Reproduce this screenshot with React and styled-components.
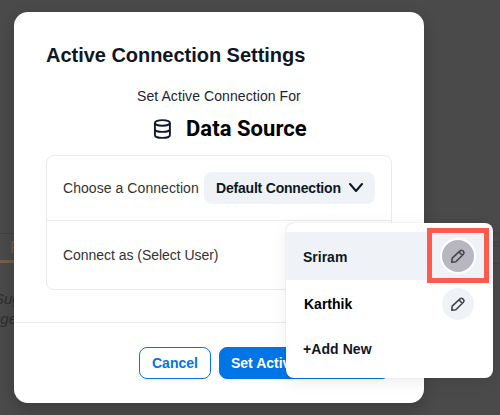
import React from "react";
import styled, { createGlobalStyle } from "styled-components";

const GlobalStyle = createGlobalStyle`
  * { box-sizing: border-box; }
  body { margin: 0; overflow: hidden; background: #4a4a4a; font-family: "Liberation Sans", Arial, sans-serif; }
`;

const Screen = styled.div`
  position: relative;
  width: 500px;
  height: 415px;
  padding: 12px 0 0 14px;
  overflow: hidden;
  background: #4a4a4a;
`;

const Backdrop = styled.div`
  position: absolute;
  top: 0;
  left: 0;
  width: 14px;
  height: 100%;
  padding-top: 233px;
  overflow: hidden;
  color: #2e2e2e;
`;

const BackdropTab = styled.div`
  height: 30px;
  padding: 5px 0 0 10px;
  border-top: 1px solid #424242;
  border-bottom: 3px solid #765f45;
  color: #765c42;
  font-size: 16px;
  line-height: 18px;
`;

const BackdropNote = styled.div`
  margin: 26px 0 0 ${(p) => p.$shift}px;
  font-size: 15px;
  font-style: italic;
  line-height: 20px;
  white-space: nowrap;
  & + & { margin-top: 0; }
`;

const BackdropRules = styled.div`
  position: absolute;
  top: 233px;
  right: 0;
  width: 10px;
  height: 31px;
  padding-top: 8px;
  border: solid #424242;
  border-width: 1px 0;
`;

const BackdropSeam = styled.div`
  height: 4px;
  border: solid #424242;
  border-width: 1px 0;
`;

const Modal = styled.section`
  position: relative;
  display: flex;
  flex-direction: column;
  width: 410px;
  height: 391px;
  border-radius: 14px;
  background: #fff;
  box-shadow: 0 6px 16px rgba(0, 0, 0, 0.2);
`;

const Title = styled.h1`
  margin: 31px 32px 0;
  color: #0e1726;
  font-size: 20px;
  line-height: 24px;
  letter-spacing: -0.03px;
  white-space: nowrap;
`;

const Caption = styled.p`
  margin: 19px 0 0 123px;
  color: #1c2433;
  font-size: 14px;
  line-height: 20px;
  letter-spacing: 0.08px;
`;

const Source = styled.div`
  display: flex;
  align-items: center;
  gap: 14px;
  height: 26px;
  margin: 10px 0 0 138px;
  color: #101828;
`;

const SourceName = styled.h2`
  margin: 0;
  color: #000;
  font-family: Roboto, sans-serif;
  font-size: 22px;
  font-weight: 700;
  line-height: 26px;
  letter-spacing: 0.05px;
  white-space: nowrap;
`;

const Settings = styled.div`
  height: 135px;
  margin: 13px 32px 0;
  border: 1px solid #ebebec;
  border-radius: 8px;
`;

const SettingRow = styled.div`
  display: flex;
  align-items: center;
  height: ${(p) => p.$height}px;
  padding: 0 16px;
  color: #333;
  font-size: 14px;
  white-space: nowrap;
  letter-spacing: ${(p) => p.$tracking}px;
  & + & { border-top: 1px solid #ebebec; }
`;

const Select = styled.button`
  display: flex;
  align-items: center;
  justify-content: space-between;
  width: 171px;
  height: 32px;
  margin-left: auto;
  padding: 0 12px;
  border: 0;
  border-radius: 8px;
  background: #eff3f7;
  color: #0e1726;
  font: 700 14px "Liberation Sans", Arial, sans-serif;
  letter-spacing: -0.2px;
`;

const Footer = styled.footer`
  display: flex;
  gap: 8px;
  height: 81px;
  margin-top: 32px;
  padding: 24px 0 0 125px;
  border-top: 1px solid #ebebec;
`;

const Button = styled.button`
  width: ${(p) => p.$width}px;
  height: 32px;
  padding: 0 ${(p) => (p.$primary ? 11 : 12)}px;
  border: 1px solid #0075e8;
  border-radius: 8px;
  background: ${(p) => (p.$primary ? "#0075e8" : "#fff")};
  color: ${(p) => (p.$primary ? "#fff" : "#0075e8")};
  font: 700 14px "Liberation Sans", Arial, sans-serif;
  text-align: left;
  white-space: nowrap;
  overflow: hidden;
`;

const Menu = styled.div`
  position: absolute;
  top: 223px;
  left: 286px;
  width: 207px;
  height: 155px;
  padding-top: 9px;
  border-radius: 8px;
  background: #fff;
  box-shadow: 0 0 1px rgba(0, 0, 0, 0.25), 0 4px 16px rgba(0, 0, 0, 0.08);
`;

const MenuItem = styled.div`
  display: flex;
  align-items: center;
  justify-content: space-between;
  height: ${(p) => p.$height}px;
  padding: 0 19px 0 ${(p) => p.$inset}px;
  background: ${(p) => (p.$active ? "#eff3f7" : "transparent")};
  color: ${(p) => p.$color || "#0e1726"};
  font-size: 14px;
  font-weight: 700;
  letter-spacing: ${(p) => p.$tracking || 0}px;
`;

const ItemLabel = styled.span`
  padding-top: ${(p) => p.$drop || 0}px;
`;

const EditButton = styled.button`
  display: flex;
  align-items: center;
  justify-content: center;
  width: 32px;
  height: 32px;
  padding: 0;
  border: 0;
  border-radius: 50%;
  background: ${(p) => (p.$active ? "#b7b6c1" : "#eff3f7")};
  box-shadow: ${(p) => (p.$active ? "0 0 0 2px #fff" : "none")};
  color: #45454d;
`;

const Highlight = styled.div`
  position: absolute;
  top: 5px;
  left: 141px;
  width: 62px;
  height: 55px;
  border: 5px solid #ff5a4c;
  pointer-events: none;
`;

const DatabaseIcon = () => (
  <svg width="20" height="20" viewBox="0 0 20 20" fill="none" stroke="currentColor" strokeWidth="1.9">
    <ellipse cx="10.4" cy="3.9" rx="7.5" ry="2.8" />
    <path d="M2.9 3.9v12c0 1.7 3.3 3 7.5 3s7.5-1.3 7.5-3v-12M2.9 9.9c0 1.7 3.3 3 7.5 3s7.5-1.3 7.5-3" />
  </svg>
);

const ChevronIcon = () => (
  <svg width="14" height="10" viewBox="0 0 14 10" fill="none" stroke="currentColor" strokeWidth="2" strokeLinecap="round" strokeLinejoin="round">
    <path d="M1 1l6 7 6-7" />
  </svg>
);

const PencilIcon = () => (
  <svg width="16" height="16" viewBox="0 0 16 16" fill="none" stroke="currentColor" strokeWidth="1.6" strokeLinejoin="round">
    <path d="M1.8 14.2l.4-4 7.8-7.3q1.4-1.3 2.7-.1l.8.8q1.2 1.3-.1 2.7l-7.6 7.5zM9 3.9l3.3 3.3" />
  </svg>
);

export default function App() {
  return (
    <>
      <GlobalStyle />
      <Screen>
        <Backdrop>
          <BackdropTab>F</BackdropTab>
          <BackdropNote $shift={-6}>Sug</BackdropNote>
          <BackdropNote $shift={-8}>gge</BackdropNote>
        </Backdrop>
        <BackdropRules><BackdropSeam /></BackdropRules>
        <Modal>
          <Title>Active Connection Settings</Title>
          <Caption>Set Active Connection For</Caption>
          <Source>
            <DatabaseIcon />
            <SourceName>Data Source</SourceName>
          </Source>
          <Settings>
            <SettingRow $height={64} $tracking={0.06}>
              Choose a Connection
              <Select>Default Connection<ChevronIcon /></Select>
            </SettingRow>
            <SettingRow $height={69} $tracking={-0.04}>Connect as (Select User)</SettingRow>
          </Settings>
          <Footer>
            <Button $width={72}>Cancel</Button>
            <Button $width={171} $primary>Set Active Connection</Button>
          </Footer>
        </Modal>
        <Menu>
          <MenuItem $height={48} $inset={17} $active>
            <ItemLabel $drop={2}>Sriram</ItemLabel>
            <EditButton $active aria-label="Edit Sriram"><PencilIcon /></EditButton>
          </MenuItem>
          <MenuItem $height={48} $inset={18} $color="#000">
            <ItemLabel>Karthik</ItemLabel>
            <EditButton aria-label="Edit Karthik"><PencilIcon /></EditButton>
          </MenuItem>
          <MenuItem $height={42} $inset={17} $tracking={0.08}>
            <ItemLabel>+Add New</ItemLabel>
          </MenuItem>
          <Highlight />
        </Menu>
      </Screen>
    </>
  );
}
